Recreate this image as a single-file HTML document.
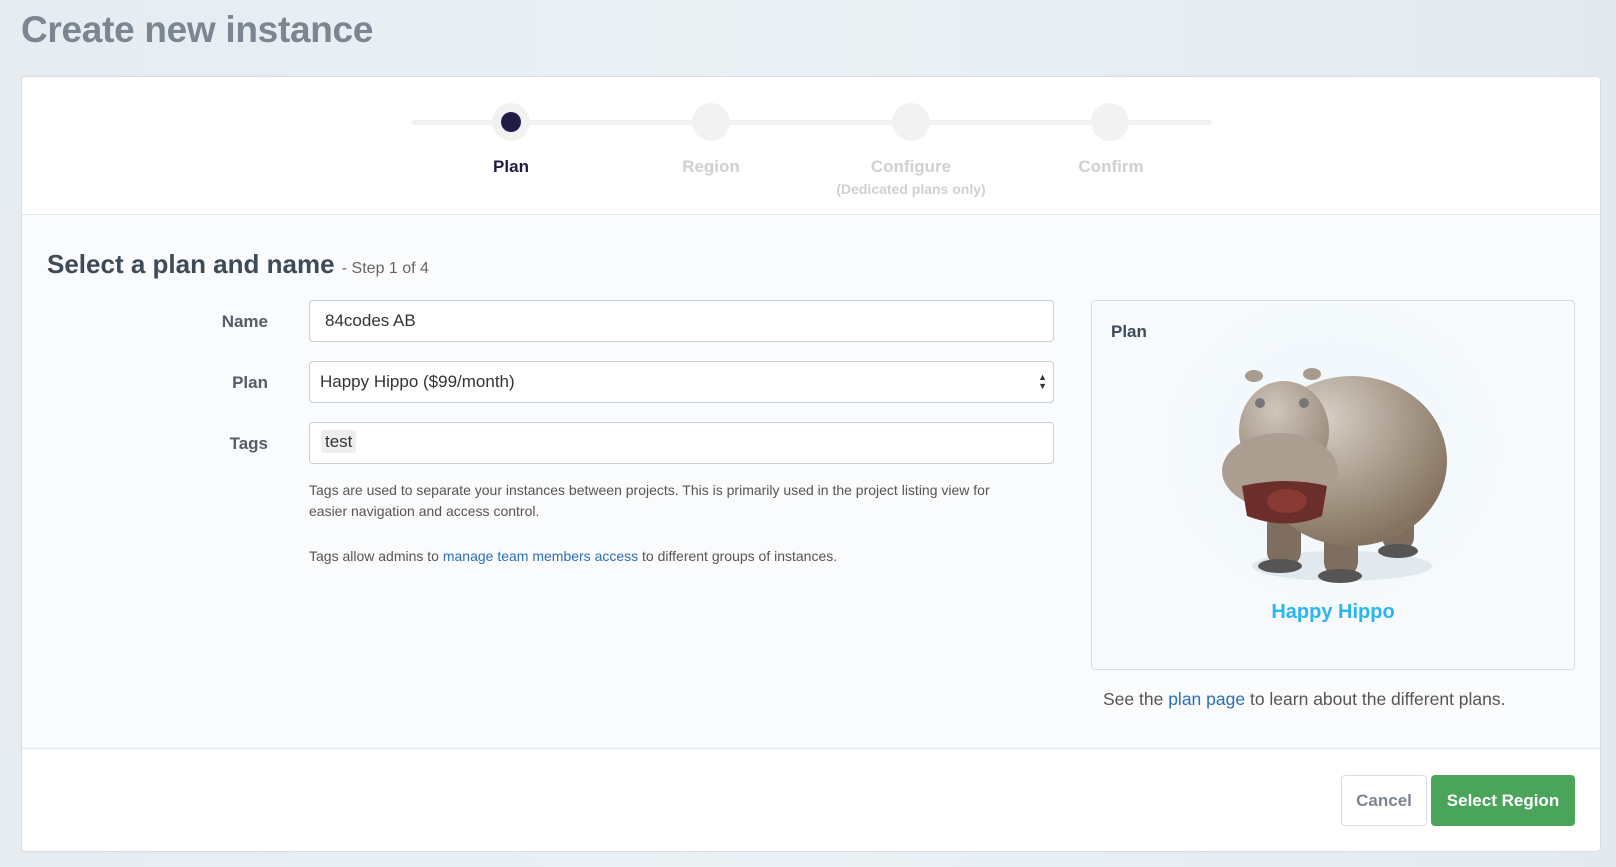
<!DOCTYPE html>
<html><head><meta charset="utf-8"><style>
*{box-sizing:border-box;margin:0;padding:0}
body{width:1616px;height:867px;overflow:hidden;font-family:"Liberation Sans",sans-serif;background:linear-gradient(90deg,#e6ecf0,#eaf0f3 50%,#e3eaee);position:relative}
.title{position:absolute;left:21px;top:9px;font-size:37px;color:#7b8691;font-weight:bold;letter-spacing:-0.3px}
.card{position:absolute;left:21px;top:76px;width:1580px;height:776px;background:#fff;border:1px solid #d5dee7;border-radius:4px;overflow:hidden}
.body{position:absolute;left:0;top:137px;width:100%;height:535px;background:#fafbfc;border-top:1px solid #dfe6ec;border-bottom:1px solid #dfe6ec}
.abs{position:absolute}
.line{position:absolute;left:389px;top:43px;width:801px;height:5px;background:#f2f2f3;border-radius:3px}
.circ{position:absolute;top:26px;width:38px;height:38px;border-radius:50%;background:#f2f2f3}
.dot{position:absolute;left:9px;top:9px;width:20px;height:20px;border-radius:50%;background:#1f1d46}
.lbl{position:absolute;top:80px;width:200px;margin-left:-100px;text-align:center;font-weight:bold;font-size:17px;color:#cfd0d2}
.flab{position:absolute;right:1332px;font-weight:bold;font-size:17px;color:#555d66}
.inp{position:absolute;left:287px;width:745px;height:42px;border:1px solid #c9cfd6;border-radius:4px;background:#fff;font-size:17px;color:#333;padding:10px 15px}
.help{position:absolute;left:287px;font-size:14px;color:#555;line-height:21px;width:705px}
a{color:#2a6fb7;text-decoration:none}
</style></head><body>
<div class="title">Create new instance</div>
<div class="card">
 <div class="line"></div>
 <div class="circ" style="left:470px"><div class="dot"></div></div>
 <div class="circ" style="left:670px"></div>
 <div class="circ" style="left:870px"></div>
 <div class="circ" style="left:1069px"></div>
 <div class="lbl" style="left:489px;color:#1f1d46">Plan</div>
 <div class="lbl" style="left:689px">Region</div>
 <div class="lbl" style="left:889px">Configure<br><span style="font-size:14px;line-height:24px">(Dedicated plans only)</span></div>
 <div class="lbl" style="left:1089px">Confirm</div>
 <div class="body">
  <div class="abs" style="left:25px;top:34px;font-size:26px;font-weight:bold;color:#3d4b59">Select a plan and name <span style="font-size:16px;font-weight:normal;color:#666">- Step 1 of 4</span></div>
  <div class="flab" style="top:97px">Name</div>
  <div class="inp" style="top:85px">84codes AB</div>
  <div class="flab" style="top:158px">Plan</div>
  <div class="inp" style="top:146px;padding-left:10px">Happy Hippo ($99/month)<span style="position:absolute;right:6px;top:11px;font-size:9px;line-height:9px;color:#333">▲<br>▼</span></div>
  <div class="flab" style="top:219px">Tags</div>
  <div class="inp" style="top:207px;padding:9px 11px"><span style="background:#eee;border-radius:3px;padding:2px 4px">test</span></div>
  <div class="help" style="top:265px">Tags are used to separate your instances between projects. This is primarily used in the project listing view for easier navigation and access control.</div>
  <div class="help" style="top:331px">Tags allow admins to <a>manage team members access</a> to different groups of instances.</div>
  <div class="abs" style="left:1069px;top:85px;width:484px;height:370px;border:1px solid #d5dee7;border-radius:4px;background:radial-gradient(ellipse at 50% 40%,#eef6fb,#f8fbfd 70%)">
   <div class="abs" style="left:19px;top:21px;font-weight:bold;font-size:17px;color:#3d4b59">Plan</div>
   <svg class="abs" style="left:120px;top:60px" width="240" height="240" viewBox="0 0 240 240">
    <defs><radialGradient id="g" cx="35%" cy="25%" r="75%"><stop offset="0" stop-color="#d8cfc6"/><stop offset="1" stop-color="#84735f"/></radialGradient>
    <radialGradient id="h" cx="40%" cy="30%" r="70%"><stop offset="0" stop-color="#d0c6bb"/><stop offset="1" stop-color="#9a8b7c"/></radialGradient></defs>
    <ellipse cx="130" cy="205" rx="90" ry="15" fill="#e1e9ee"/>
    <rect x="55" y="150" width="34" height="55" rx="14" fill="#7e6e60"/>
    <rect x="112" y="165" width="34" height="50" rx="14" fill="#7e6e60"/>
    <rect x="170" y="140" width="32" height="50" rx="14" fill="#7e6e60"/>
    <ellipse cx="68" cy="205" rx="22" ry="7" fill="#555"/><ellipse cx="128" cy="215" rx="22" ry="7" fill="#555"/><ellipse cx="186" cy="190" rx="20" ry="7" fill="#555"/>
    <ellipse cx="140" cy="100" rx="95" ry="85" fill="url(#g)"/>
    <ellipse cx="72" cy="70" rx="45" ry="50" fill="url(#h)"/>
    <ellipse cx="68" cy="110" rx="58" ry="38" fill="#ab9d8f"/>
    <path d="M30 125 Q75 115 115 125 L110 155 Q75 170 35 155 Z" fill="#6b2e2a"/>
    <ellipse cx="75" cy="140" rx="20" ry="12" fill="#8a3a34"/>
    <circle cx="48" cy="42" r="5" fill="#777"/><circle cx="92" cy="42" r="5" fill="#777"/>
    <ellipse cx="42" cy="15" rx="9" ry="6" fill="#a89a8c"/><ellipse cx="100" cy="13" rx="9" ry="6" fill="#a89a8c"/>
   </svg>
   <div class="abs" style="left:0;width:100%;top:300px;text-align:center;font-weight:bold;font-size:20px;color:#29b5f2">Happy Hippo</div>
  </div>
  <div class="abs" style="left:1081px;top:474px;font-size:17.5px;color:#555">See the <a>plan page</a> to learn about the different plans.</div>
 </div>
 <div class="abs" style="left:1319px;top:698px;width:86px;height:51px;border:1px solid #d5dee7;border-radius:4px;text-align:center;line-height:49px;font-weight:bold;font-size:17px;color:#7b8691">Cancel</div>
 <div class="abs" style="left:1409px;top:698px;width:144px;height:51px;background:#4aa55a;border-radius:4px;text-align:center;line-height:51px;font-weight:bold;font-size:17px;color:#fff">Select Region</div>
</div>
</body></html>
